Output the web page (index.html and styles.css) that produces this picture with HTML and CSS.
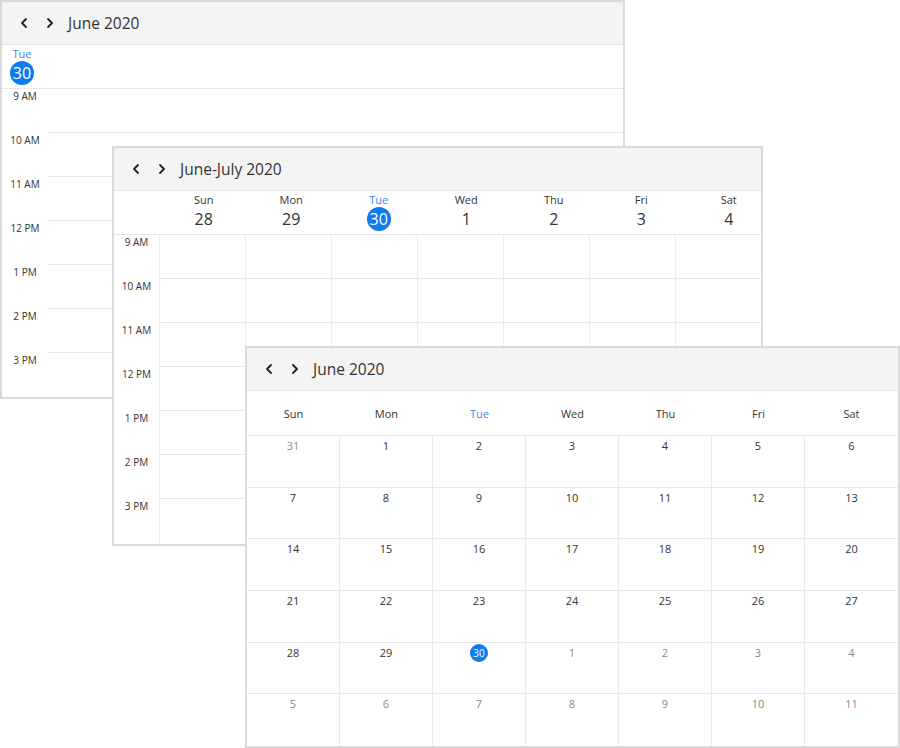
FILE: index.html
```html
<!DOCTYPE html>
<html lang="en">
<head>
    <meta charset="UTF-8">
    <meta name="viewport" content="width=device-width, initial-scale=1.0">
    <title>Scheduler Views</title>
    <link rel="stylesheet" href="styles.css">
</head>
<body>
    <!-- Day view -->
    <div class="scheduler day-view">
        <div class="sched-header">
            <span class="nav-btn"><svg viewBox="0 0 12 12"><path d="M8 2 L4 6 L8 10"/></svg></span>
            <span class="nav-btn"><svg viewBox="0 0 12 12"><path d="M4 2 L8 6 L4 10"/></svg></span>
            <span class="sched-title">June 2020</span>
        </div>
        <div class="day-head">
            <div class="day-cell today">
                <div class="day-name">Tue</div>
                <div class="day-num">30</div>
            </div>
        </div>
        <div class="time-grid">
            <div class="time-row"><div class="time-label">9 AM</div><div class="slot"></div></div>
            <div class="time-row"><div class="time-label">10 AM</div><div class="slot"></div></div>
            <div class="time-row"><div class="time-label">11 AM</div><div class="slot"></div></div>
            <div class="time-row"><div class="time-label">12 PM</div><div class="slot"></div></div>
            <div class="time-row"><div class="time-label">1 PM</div><div class="slot"></div></div>
            <div class="time-row"><div class="time-label">2 PM</div><div class="slot"></div></div>
            <div class="time-row"><div class="time-label">3 PM</div><div class="slot"></div></div>
        </div>
    </div>

    <!-- Week view -->
    <div class="scheduler week-view">
        <div class="sched-header">
            <span class="nav-btn"><svg viewBox="0 0 12 12"><path d="M8 2 L4 6 L8 10"/></svg></span>
            <span class="nav-btn"><svg viewBox="0 0 12 12"><path d="M4 2 L8 6 L4 10"/></svg></span>
            <span class="sched-title">June-July 2020</span>
        </div>
        <div class="day-head">
            <div class="gutter"></div>
            <div class="day-cell"><div class="day-name">Sun</div><div class="day-num">28</div></div>
            <div class="day-cell"><div class="day-name">Mon</div><div class="day-num">29</div></div>
            <div class="day-cell today"><div class="day-name">Tue</div><div class="day-num">30</div></div>
            <div class="day-cell"><div class="day-name">Wed</div><div class="day-num">1</div></div>
            <div class="day-cell"><div class="day-name">Thu</div><div class="day-num">2</div></div>
            <div class="day-cell"><div class="day-name">Fri</div><div class="day-num">3</div></div>
            <div class="day-cell"><div class="day-name">Sat</div><div class="day-num">4</div></div>
        </div>
        <div class="time-grid">
            <div class="time-row"><div class="time-label">9 AM</div><div class="slot"></div><div class="slot"></div><div class="slot"></div><div class="slot"></div><div class="slot"></div><div class="slot"></div><div class="slot"></div></div>
            <div class="time-row"><div class="time-label">10 AM</div><div class="slot"></div><div class="slot"></div><div class="slot"></div><div class="slot"></div><div class="slot"></div><div class="slot"></div><div class="slot"></div></div>
            <div class="time-row"><div class="time-label">11 AM</div><div class="slot"></div><div class="slot"></div><div class="slot"></div><div class="slot"></div><div class="slot"></div><div class="slot"></div><div class="slot"></div></div>
            <div class="time-row"><div class="time-label">12 PM</div><div class="slot"></div><div class="slot"></div><div class="slot"></div><div class="slot"></div><div class="slot"></div><div class="slot"></div><div class="slot"></div></div>
            <div class="time-row"><div class="time-label">1 PM</div><div class="slot"></div><div class="slot"></div><div class="slot"></div><div class="slot"></div><div class="slot"></div><div class="slot"></div><div class="slot"></div></div>
            <div class="time-row"><div class="time-label">2 PM</div><div class="slot"></div><div class="slot"></div><div class="slot"></div><div class="slot"></div><div class="slot"></div><div class="slot"></div><div class="slot"></div></div>
            <div class="time-row"><div class="time-label">3 PM</div><div class="slot"></div><div class="slot"></div><div class="slot"></div><div class="slot"></div><div class="slot"></div><div class="slot"></div><div class="slot"></div></div>
        </div>
    </div>

    <!-- Month view -->
    <div class="scheduler month-view">
        <div class="sched-header">
            <span class="nav-btn"><svg viewBox="0 0 12 12"><path d="M8 2 L4 6 L8 10"/></svg></span>
            <span class="nav-btn"><svg viewBox="0 0 12 12"><path d="M4 2 L8 6 L4 10"/></svg></span>
            <span class="sched-title">June 2020</span>
        </div>
        <div class="month-head">
            <div>Sun</div><div>Mon</div><div class="today">Tue</div><div>Wed</div><div>Thu</div><div>Fri</div><div>Sat</div>
        </div>
        <div class="month-grid">
            <div class="cell other">31</div><div class="cell">1</div><div class="cell">2</div><div class="cell">3</div><div class="cell">4</div><div class="cell">5</div><div class="cell">6</div>
            <div class="cell">7</div><div class="cell">8</div><div class="cell">9</div><div class="cell">10</div><div class="cell">11</div><div class="cell">12</div><div class="cell">13</div>
            <div class="cell">14</div><div class="cell">15</div><div class="cell">16</div><div class="cell">17</div><div class="cell">18</div><div class="cell">19</div><div class="cell">20</div>
            <div class="cell">21</div><div class="cell">22</div><div class="cell">23</div><div class="cell">24</div><div class="cell">25</div><div class="cell">26</div><div class="cell">27</div>
            <div class="cell">28</div><div class="cell">29</div><div class="cell"><span class="today-dot">30</span></div><div class="cell other">1</div><div class="cell other">2</div><div class="cell other">3</div><div class="cell other">4</div>
            <div class="cell other">5</div><div class="cell other">6</div><div class="cell other">7</div><div class="cell other">8</div><div class="cell other">9</div><div class="cell other">10</div><div class="cell other">11</div>
        </div>
    </div>
</body>
</html>
```

FILE: styles.css
```css
/* page */
body {
    margin: 0;
    width: 900px;
    height: 748px;
    position: relative;
    overflow: hidden;
    background: #ffffff;
    font-family: "Open Sans", "Noto Sans", sans-serif;
    color: #333333;
}

/* overlapping scheduler windows */
.scheduler {
    position: absolute;
    box-sizing: border-box;
    display: flex;
    flex-direction: column;
    background: #ffffff;
    border: 2px solid #dadada;
}

.day-view {
    left: 0;
    top: 0;
    width: 625px;
    height: 399px;
}

.week-view {
    left: 112px;
    top: 146px;
    width: 651px;
    height: 400px;
}

.month-view {
    left: 245px;
    top: 346px;
    width: 655px;
    height: 402px;
}

/* header bar */
.sched-header {
    box-sizing: border-box;
    height: 43px;
    flex: none;
    display: flex;
    align-items: center;
    padding-left: 16px;
    background: #f4f4f4;
    border-bottom: 1px solid #e4e4e4;
}

.nav-btn {
    width: 12px;
    height: 12px;
    margin-right: 14px;
    display: flex;
}

.nav-btn:nth-child(2) {
    margin-right: 12px;
}

.nav-btn svg {
    width: 12px;
    height: 12px;
    fill: none;
    stroke: #222222;
    stroke-width: 1.8;
    stroke-linecap: round;
    stroke-linejoin: round;
}

.sched-title {
    font-size: 15.5px;
    color: #333333;
    line-height: 20px;
}

/* day header (day + week) */
.day-head {
    box-sizing: border-box;
    height: 44px;
    flex: none;
    display: flex;
    overflow: hidden;
    border-bottom: 1px solid #e6e6e6;
}

.day-view .day-cell {
    width: 40px;
}

.week-view .gutter {
    flex: none;
    width: 46px;
}

.week-view .day-cell {
    flex: 0 0 87.5px;
}

.day-cell {
    display: flex;
    flex-direction: column;
    align-items: center;
    padding-top: 2px;
}

.day-name {
    font-size: 11px;
    line-height: 14px;
    color: #333333;
}

.day-num {
    font-size: 16px;
    line-height: 24px;
    height: 24px;
    min-width: 24px;
    text-align: center;
    color: #333333;
}

.day-cell.today .day-name {
    color: #3b86f0;
}

.day-cell.today .day-num {
    background: #0f7bf0;
    color: #ffffff;
    border-radius: 50%;
}

/* time rows */
.time-grid {
    flex: 1;
    display: flex;
    flex-direction: column;
}

.time-row {
    box-sizing: border-box;
    height: 44px;
    flex: none;
    display: grid;
}

.day-view .time-row {
    grid-template-columns: 46px 1fr;
}

.week-view .time-row {
    grid-template-columns: 45px repeat(7, 1fr);
}

.time-label {
    font-size: 10px;
    line-height: 12px;
    text-align: center;
    color: #333333;
    padding-top: 1px;
}

.slot {
    border-bottom: 1px solid #e8e8e8;
}

.week-view .slot {
    border-left: 1px solid #ebebeb;
}

.time-row:last-child .slot {
    border-bottom: none;
}

/* month view */
.month-head {
    box-sizing: border-box;
    height: 45px;
    flex: none;
    display: grid;
    grid-template-columns: repeat(7, 1fr);
    align-items: center;
    text-align: center;
    font-size: 11px;
    border-bottom: 1px solid #e6e6e6;
}

.month-head .today {
    color: #3b86f0;
}

.month-grid {
    flex: 1;
    display: grid;
    grid-template-columns: repeat(7, 1fr);
    grid-template-rows: repeat(6, 1fr);
}

.cell {
    font-size: 11px;
    line-height: 18px;
    padding-top: 1px;
    text-align: center;
    color: #333333;
    border-right: 1px solid #e8e8e8;
    border-bottom: 1px solid #e8e8e8;
}

.cell:nth-child(7n) {
    border-right: none;
}

.cell:nth-last-child(-n+7) {
    border-bottom: none;
}

.cell.other {
    color: #8a8a8a;
}

.today-dot {
    display: inline-block;
    width: 18px;
    height: 18px;
    border-radius: 50%;
    background: #0f7bf0;
    color: #ffffff;
    font-size: 10px;
}
```
